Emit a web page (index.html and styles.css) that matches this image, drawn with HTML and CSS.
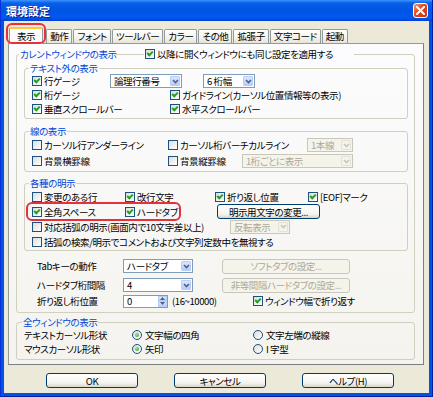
FILE: index.html
```html
<!DOCTYPE html>
<html lang="ja">
<head>
  <meta charset="UTF-8">
  <title>環境設定</title>
  <link rel="stylesheet" href="styles.css">
</head>
<body>

<div class="window">
  <div class="titlebar">
    <span class="title">環境設定</span>
    <span class="close">
      <svg width="9" height="9" viewBox="0 0 9 9"><path d="M1 1L8 8M8 1L1 8" stroke="#fff" stroke-width="2" stroke-linecap="square"/></svg>
    </span>
  </div>

  <div class="client">
    <div class="tabs">
      <span class="tab active">表示</span>
      <span class="tab">動作</span>
      <span class="tab">フォント</span>
      <span class="tab">ツールバー</span>
      <span class="tab">カラー</span>
      <span class="tab">その他</span>
      <span class="tab">拡張子</span>
      <span class="tab">文字コード</span>
      <span class="tab">起動</span>
    </div>

    <div class="page">
      <fieldset class="group outer">
        <legend class="outer-legend">
          <span class="legend-text">カレントウィンドウの表示</span>
          <span class="legend-line"></span>
          <label class="check"><span class="cb on"></span>以降に開くウィンドウにも同じ設定を適用する</label>
        </legend>

        <!-- テキスト外の表示 -->
        <fieldset class="group inner g1">
          <legend>テキスト外の表示</legend>
          <div class="row">
            <label class="check w78"><span class="cb on"></span>行ゲージ</label>
            <span class="select w72"><span class="val">論理行番号</span><span class="arrow"><svg width="7" height="5" viewBox="0 0 7 5"><path d="M1 1L3.5 3.5L6 1" fill="none" stroke="#4d6185" stroke-width="1.6"/></svg></span></span>
            <span class="select w52 ml21"><span class="val">6 桁幅</span><span class="arrow"><svg width="7" height="5" viewBox="0 0 7 5"><path d="M1 1L3.5 3.5L6 1" fill="none" stroke="#4d6185" stroke-width="1.6"/></svg></span></span>
          </div>
          <div class="row">
            <label class="check w138"><span class="cb on"></span>桁ゲージ</label>
            <label class="check"><span class="cb on"></span>ガイドライン(カーソル位置情報等の表示)</label>
          </div>
          <div class="row">
            <label class="check w138"><span class="cb on"></span>垂直スクロールバー</label>
            <label class="check"><span class="cb on"></span>水平スクロールバー</label>
          </div>
        </fieldset>

        <!-- 線の表示 -->
        <fieldset class="group inner g2">
          <legend>線の表示</legend>
          <div class="row">
            <label class="check w136"><span class="cb"></span>カーソル行アンダーライン</label>
            <label class="check w139"><span class="cb"></span>カーソル桁バーチカルライン</label>
            <span class="select disabled w46"><span class="val">1本線</span><span class="arrow"><svg width="7" height="5" viewBox="0 0 7 5"><path d="M1 1L3.5 3.5L6 1" fill="none" stroke="#c9c7ba" stroke-width="1.6"/></svg></span></span>
          </div>
          <div class="row">
            <label class="check w136"><span class="cb"></span>背景横罫線</label>
            <label class="check w74"><span class="cb"></span>背景縦罫線</label>
            <span class="select disabled w111"><span class="val">1桁ごとに表示</span><span class="arrow"><svg width="7" height="5" viewBox="0 0 7 5"><path d="M1 1L3.5 3.5L6 1" fill="none" stroke="#c9c7ba" stroke-width="1.6"/></svg></span></span>
          </div>
        </fieldset>

        <!-- 各種の明示 -->
        <fieldset class="group inner g3">
          <legend>各種の明示</legend>
          <div class="row">
            <label class="check w93"><span class="cb"></span>変更のある行</label>
            <label class="check w90"><span class="cb on"></span>改行文字</label>
            <label class="check w93"><span class="cb on"></span>折り返し位置</label>
            <label class="check"><span class="cb on"></span>[EOF]マーク</label>
          </div>
          <div class="row">
            <label class="check w93"><span class="cb on"></span>全角スペース</label>
            <label class="check w92"><span class="cb on"></span>ハードタブ</label>
            <span class="btn w103">明示用文字の変更...</span>
          </div>
          <div class="row">
            <label class="check w198"><span class="cb"></span>対応括弧の明示(画面内で10文字差以上)</label>
            <span class="select disabled w60"><span class="val">反転表示</span><span class="arrow"><svg width="7" height="5" viewBox="0 0 7 5"><path d="M1 1L3.5 3.5L6 1" fill="none" stroke="#c9c7ba" stroke-width="1.6"/></svg></span></span>
          </div>
          <div class="row">
            <label class="check"><span class="cb"></span>括弧の検索/明示でコメントおよび文字列定数中を無視する</label>
          </div>
        </fieldset>

        <!-- タブ -->
        <div class="tab-rows">
          <div class="row">
            <span class="label">Tabキーの動作</span>
            <span class="select w70"><span class="val">ハードタブ</span><span class="arrow"><svg width="7" height="5" viewBox="0 0 7 5"><path d="M1 1L3.5 3.5L6 1" fill="none" stroke="#4d6185" stroke-width="1.6"/></svg></span></span>
            <span class="btn disabled w128 ml29">ソフトタブの設定...</span>
          </div>
          <div class="row">
            <span class="label">ハードタブ桁間隔</span>
            <span class="select w70"><span class="val">4</span><span class="arrow"><svg width="7" height="5" viewBox="0 0 7 5"><path d="M1 1L3.5 3.5L6 1" fill="none" stroke="#4d6185" stroke-width="1.6"/></svg></span></span>
            <span class="btn disabled w128 ml29">非等間隔ハードタブの設定...</span>
          </div>
          <div class="row">
            <span class="label">折り返し桁位置</span>
            <span class="spin"><span class="val">0</span><span class="spin-btns"><span><svg width="5" height="3" viewBox="0 0 5 3"><path d="M0 3L2.5 0L5 3Z" fill="#4d6185"/></svg></span><span><svg width="5" height="3" viewBox="0 0 5 3"><path d="M0 0L2.5 3L5 0Z" fill="#4d6185"/></svg></span></span></span>
            <span class="range">(16~10000)</span>
            <label class="check"><span class="cb on"></span>ウィンドウ幅で折り返す</label>
          </div>
        </div>
      </fieldset>

      <!-- 全ウィンドウの表示 -->
      <fieldset class="group g4">
        <legend>全ウィンドウの表示</legend>
        <div class="row">
          <span class="label2">テキストカーソル形状</span>
          <label class="check w121"><span class="rb on"></span>文字幅の四角</label>
          <label class="check"><span class="rb"></span>文字左端の縦線</label>
        </div>
        <div class="row">
          <span class="label2">マウスカーソル形状</span>
          <label class="check w121"><span class="rb on"></span>矢印</label>
          <label class="check"><span class="rb"></span>I 字型</label>
        </div>
      </fieldset>
    </div>

    <div class="buttons">
      <span class="btn big">OK</span>
      <span class="btn big">キャンセル</span>
      <span class="btn big">ヘルプ(H)</span>
    </div>
  </div>

  <!-- red annotations -->
  <span class="mark mark-tab"></span>
  <span class="mark mark-row"></span>
</div>

</body>
</html>
```

FILE: styles.css
```css
body {
  margin: 0;
  background: #fff;
  font-family: "Noto Sans CJK JP", sans-serif;
  font-size: 9.5px;
  letter-spacing: -0.4px;
  font-feature-settings: "palt";
  color: #000;
}

.window {
  position: relative;
  width: 433px;
  height: 397px;
  box-sizing: border-box;
  background: #0054e3;
  border-left: 1px solid #0831d9;
  border-right: 1px solid #001ea0;
  border-bottom: 1px solid #001ea0;
  display: flex;
  flex-direction: column;
}

.titlebar {
  height: 21px;
  display: flex;
  align-items: center;
  justify-content: space-between;
  padding: 0 4px 0 5px;
  background: linear-gradient(#3d95ff 0, #0a5fe8 3px, #0054e3 50%, #0058ee 85%, #003dd7 100%);
}

.title {
  color: #fff;
  font-weight: bold;
  font-size: 11px;
  letter-spacing: 0;
  line-height: 12px;
  text-shadow: 1px 1px #0a1883;
}

.close {
  width: 15px;
  height: 15px;
  box-sizing: border-box;
  border: 1px solid #fff;
  border-radius: 3px;
  background: linear-gradient(135deg, #f19a7c, #e0481d 45%, #c7350f);
  display: flex;
  align-items: center;
  justify-content: center;
}

.client {
  flex: 1;
  margin: 0 3px 3px;
  background: #ece9d8;
  padding: 8px 5px 0 4px;
}

/* tabs */
.tabs {
  display: flex;
  height: 14px;
  padding-left: 1px;
}

.tab {
  height: 14px;
  box-sizing: border-box;
  padding: 0 3px;
  margin-right: 1px;
  border: 1px solid #919b9c;
  border-bottom: none;
  border-radius: 2px 2px 0 0;
  background: linear-gradient(#fff, #f3f2ec 60%, #e6e4d9);
  line-height: 13px;
  white-space: nowrap;
}

.tab.active {
  position: relative;
  height: 17px;
  margin-top: -2px;
  margin-right: 3px;
  padding: 0 7px;
  border-top: 2px solid #ffc83c;
  background: #fcfcfe;
  line-height: 14px;
  z-index: 1;
}

.page {
  border: 1px solid #919b9c;
  border-right-color: #7a8184;
  border-bottom-color: #7a8184;
  background: linear-gradient(#fcfcfe, #f4f3ee);
  padding: 4px 8px 4px 7px;
}

/* groups */
.group {
  margin: 0;
  min-width: 0;
  border: 1px solid #d0d0bf;
  border-radius: 3px;
}

.group legend {
  color: #0046d5;
  line-height: 12px;
  padding: 0 1px;
  margin-left: -3px;
}

.outer {
  padding: 2px 6px 3px 7px;
}

.outer-legend {
  display: flex;
  align-items: center;
  margin-left: -5px !important;
  padding: 0 21px 0 1px !important;
}

.legend-text {
  width: 94px;
  white-space: nowrap;
}

.outer-legend .check {
  color: #000;
  margin-left: 1px;
}

.legend-line {
  width: 28px;
  height: 1px;
  background: #d0d0bf;
  margin-left: 2px;
}

.inner {
  padding: 0 6px 2px 7px;
}

.g1 .row { height: 14px; }

.g2 { margin-top: 6px; }
.g2 .row { height: 16px; }

.g3 { margin-top: 5px; padding-bottom: 1px; }
.g3 .row { height: 15px; }

.g4 {
  margin-top: 3px;
  padding: 0 6px 3px 7px;
}
.g4 legend { margin-left: -2px; }
.g4 .row { height: 14px; }

.tab-rows {
  margin-top: 7px;
  padding-left: 13px;
}
.tab-rows .row { height: 16px; }
.tab-rows .row + .row { margin-top: 3px; }
.tab-rows .row + .row + .row { margin-top: 0; }

.row {
  display: flex;
  align-items: center;
  white-space: nowrap;
}

.label { width: 86px; }
.label2 { width: 108px; }
.range { width: 81px; margin-left: 4px; }

.w46 { width: 46px; }
.w52 { width: 52px; }
.w60 { width: 60px; }
.w70 { width: 70px; }
.w72 { width: 72px; }
.w74 { width: 74px; }
.w78 { width: 78px; }
.w90 { width: 90px; }
.w92 { width: 92px; }
.w93 { width: 93px; }
.w103 { width: 103px; }
.w111 { width: 111px; }
.w121 { width: 121px; }
.w128 { width: 128px; }
.w136 { width: 136px; }
.w138 { width: 138px; }
.w139 { width: 139px; }
.w198 { width: 198px; }
.ml21 { margin-left: 21px; }
.ml29 { margin-left: 29px; }

/* checkbox / radio */
.check {
  display: flex;
  align-items: center;
  flex: none;
  line-height: 12px;
}

.cb {
  position: relative;
  width: 10px;
  height: 10px;
  box-sizing: border-box;
  border: 1px solid #1c5180;
  background: linear-gradient(135deg, #dcdcd7, #fff);
  margin-right: 2px;
  flex: none;
}

.cb.on::after {
  content: "";
  position: absolute;
  left: 1px;
  top: 1px;
  width: 4px;
  height: 2px;
  border-left: 2px solid #21a121;
  border-bottom: 2px solid #21a121;
  transform: rotate(-45deg);
}

.rb {
  width: 10px;
  height: 10px;
  box-sizing: border-box;
  border: 1px solid #1c5180;
  border-radius: 50%;
  background: linear-gradient(135deg, #dcdcd7, #fff);
  margin-right: 3px;
  display: flex;
  align-items: center;
  justify-content: center;
  flex: none;
}

.rb.on::after {
  content: "";
  width: 4px;
  height: 4px;
  border-radius: 50%;
  background: radial-gradient(circle at 35% 35%, #9be29b, #21a121);
}

/* select */
.select {
  display: flex;
  align-items: center;
  height: 14px;
  box-sizing: border-box;
  border: 1px solid #7f9db9;
  background: #fff;
  flex: none;
}

.select .val {
  flex: 1;
  padding-left: 3px;
  line-height: 12px;
}

.select .arrow {
  width: 10px;
  height: 10px;
  margin-right: 1px;
  box-sizing: border-box;
  border: 1px solid #b8ccf8;
  border-radius: 1px;
  background: linear-gradient(#dbe6fe, #b9cdfa);
  display: flex;
  align-items: center;
  justify-content: center;
}

.select.disabled {
  border-color: #c9c7ba;
  background: #f5f4ea;
  color: #aca899;
}

.select.disabled .arrow {
  border-color: #e3e1d6;
  background: #f5f4ea;
}

/* spin */
.spin {
  display: flex;
  align-items: center;
  width: 45px;
  height: 13px;
  box-sizing: border-box;
  border: 1px solid #7f9db9;
  background: #fff;
}

.spin .val {
  flex: 1;
  padding-left: 3px;
  line-height: 11px;
}

.spin-btns {
  display: flex;
  flex-direction: column;
  width: 9px;
  height: 11px;
}

.spin-btns span {
  flex: 1;
  display: flex;
  align-items: center;
  justify-content: center;
  background: linear-gradient(#dbe6fe, #b9cdfa);
  border: 1px solid #b8ccf8;
  box-sizing: border-box;
}

/* buttons */
.btn {
  height: 15px;
  box-sizing: border-box;
  border: 1px solid #003c74;
  border-radius: 3px;
  background: linear-gradient(#fff, #f4f3ee 70%, #d8d4c8);
  display: flex;
  align-items: center;
  justify-content: center;
  line-height: 12px;
  flex: none;
}

.btn.disabled {
  border-color: #c9c7ba;
  background: #f5f4ea;
  color: #aca899;
}

.buttons {
  display: flex;
  gap: 36px;
  margin-top: 8px;
  padding-left: 38px;
}

.btn.big {
  width: 92px;
}

/* red annotation marks */
.mark {
  position: absolute;
  border: 2px solid #e8303a;
  border-radius: 6px;
  z-index: 2;
}

.mark-tab {
  left: 5px;
  top: 23px;
  width: 36px;
  height: 17px;
}

.mark-row {
  left: 25px;
  top: 202px;
  width: 151px;
  height: 15px;
}
```
